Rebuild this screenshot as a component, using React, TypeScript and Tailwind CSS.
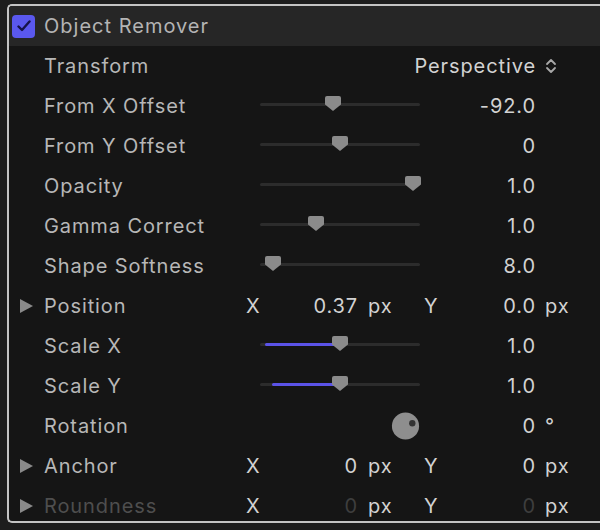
import React from "react";

const F = { fontFamily: "Inter, 'Noto Sans', sans-serif" };

function Thumb() {
  return (
    <svg width="16" height="15" viewBox="0 0 16 15" className="absolute" style={{ left: -8, top: -8 }}>
      <path d="M2 0 H14 Q16 0 16 2 V8.5 L8 15 L0 8.5 V2 Q0 0 2 0 Z" fill="#8b8b8b" />
    </svg>
  );
}

function Slider({ pos, fillFrom }: { pos: number; fillFrom?: number }) {
  return (
    <div className="relative w-[160px] h-[40px]">
      <div className="absolute left-0 right-0 top-[17px] h-[3px] rounded-full bg-[#2c2c2c]" />
      {fillFrom !== undefined && (
        <div
          className="absolute top-[17px] h-[3px] rounded-full bg-[#5b53e8]"
          style={{ left: fillFrom, width: pos - fillFrom }}
        />
      )}
      <div className="absolute top-[18px]" style={{ left: pos }}>
        <Thumb />
      </div>
    </div>
  );
}

function Tri() {
  return (
    <svg width="13" height="14" viewBox="0 0 13 14">
      <path d="M0 0 L13 7 L0 14 Z" fill="#8a8a8a" />
    </svg>
  );
}

const T = "text-[20px] tracking-[0.9px] leading-[24px]";

function Row({
  label,
  tri,
  dim,
  children,
}: {
  label: string;
  tri?: boolean;
  dim?: boolean;
  children?: React.ReactNode;
}) {
  return (
    <div className="flex items-center h-[40px] shrink-0">
      <div className="w-[35px] flex items-center pl-[11px]">{tri && <Tri />}</div>
      <div className={`w-[216px] whitespace-nowrap ${T} ${dim ? "text-[#4e4e4e]" : "text-[#b7b7b7]"}`}>
        {label}
      </div>
      {children}
    </div>
  );
}

function SliderRow({ label, pos, value, fillFrom }: { label: string; pos: number; value: string; fillFrom?: number }) {
  return (
    <Row label={label}>
      <Slider pos={pos} fillFrom={fillFrom} />
      <div className={`w-[116px] text-right ${T} text-[#d2d2d2]`}>{value}</div>
    </Row>
  );
}

function XYRow({ label, x, y, dim }: { label: string; x: string; y: string; dim?: boolean }) {
  const vc = dim ? "text-[#3e3e3e]" : "text-[#d2d2d2]";
  return (
    <Row label={label} tri dim={dim}>
      <div className={`flex items-center ${T} -ml-[14px] whitespace-nowrap`}>
        <div className="w-[18px] text-[#d2d2d2]">X</div>
        <div className={`w-[94px] text-right ${vc}`}>{x}</div>
        <div className="w-[66px] pl-[10px] text-[#d2d2d2]">px</div>
        <div className="w-[18px] text-[#d2d2d2]">Y</div>
        <div className={`w-[94px] text-right ${vc}`}>{y}</div>
        <div className="pl-[9px] text-[#d2d2d2]">px</div>
      </div>
    </Row>
  );
}

export default function App() {
  return (
    <div className="w-[600px] h-[530px] bg-[#1d1d1d] pt-[4px] pl-[7px] overflow-hidden" style={F}>
      <div className="h-[519px] border-l-2 border-t-2 border-b-2 border-[#c4c4c4] rounded-l-[5px] bg-[#151515] overflow-hidden flex flex-col">
        <div className="h-[40px] shrink-0 bg-[#262626] flex items-center">
          <div className="ml-[3px] w-[23px] h-[23px] rounded-[4px] bg-[#5a58ee] flex items-center justify-center">
            <svg width="14" height="12" viewBox="0 0 14 12">
              <path d="M1.5 6.5 L5 10 L12.5 1.5" fill="none" stroke="#15134a" strokeWidth="2.4" strokeLinecap="round" strokeLinejoin="round" />
            </svg>
          </div>
          <div className="ml-[9px] text-[20px] tracking-[1px] text-[#b4b4b4] whitespace-nowrap">Object Remover</div>
        </div>
        <div className="flex flex-col">
          <Row label="Transform">
            <div className={`w-[276px] flex items-center justify-end ${T} text-[#d2d2d2]`}>
              Perspective
            </div>
            <svg width="12" height="18" viewBox="0 0 12 18" className="ml-[9px]">
              <path d="M2 7 L6 3 L10 7 M2 11 L6 15 L10 11" fill="none" stroke="#a8a8a8" strokeWidth="1.8" strokeLinecap="round" strokeLinejoin="round" />
            </svg>
          </Row>
          <SliderRow label="From X Offset" pos={73} value="-92.0" />
          <SliderRow label="From Y Offset" pos={80} value="0" />
          <SliderRow label="Opacity" pos={153} value="1.0" />
          <SliderRow label="Gamma Correct" pos={56} value="1.0" />
          <SliderRow label="Shape Softness" pos={13} value="8.0" />
          <XYRow label="Position" x="0.37" y="0.0" />
          <SliderRow label="Scale X" pos={80} value="1.0" fillFrom={5} />
          <SliderRow label="Scale Y" pos={80} value="1.0" fillFrom={12} />
          <Row label="Rotation">
            <div className="w-[160px] h-[40px] flex items-center">
              <svg width="32" height="32" viewBox="0 0 32 32" className="ml-[131px]">
                <circle cx="16" cy="16" r="15" fill="#8e8e8e" />
                <circle cx="23.5" cy="13" r="3.5" fill="#333333" />
              </svg>
            </div>
            <div className={`w-[116px] text-right ${T} text-[#d2d2d2]`}>0</div>
            <div className={`pl-[9px] ${T} text-[#d2d2d2]`}>°</div>
          </Row>
          <XYRow label="Anchor" x="0" y="0" />
          <XYRow label="Roundness" x="0" y="0" dim />
        </div>
      </div>
    </div>
  );
}
